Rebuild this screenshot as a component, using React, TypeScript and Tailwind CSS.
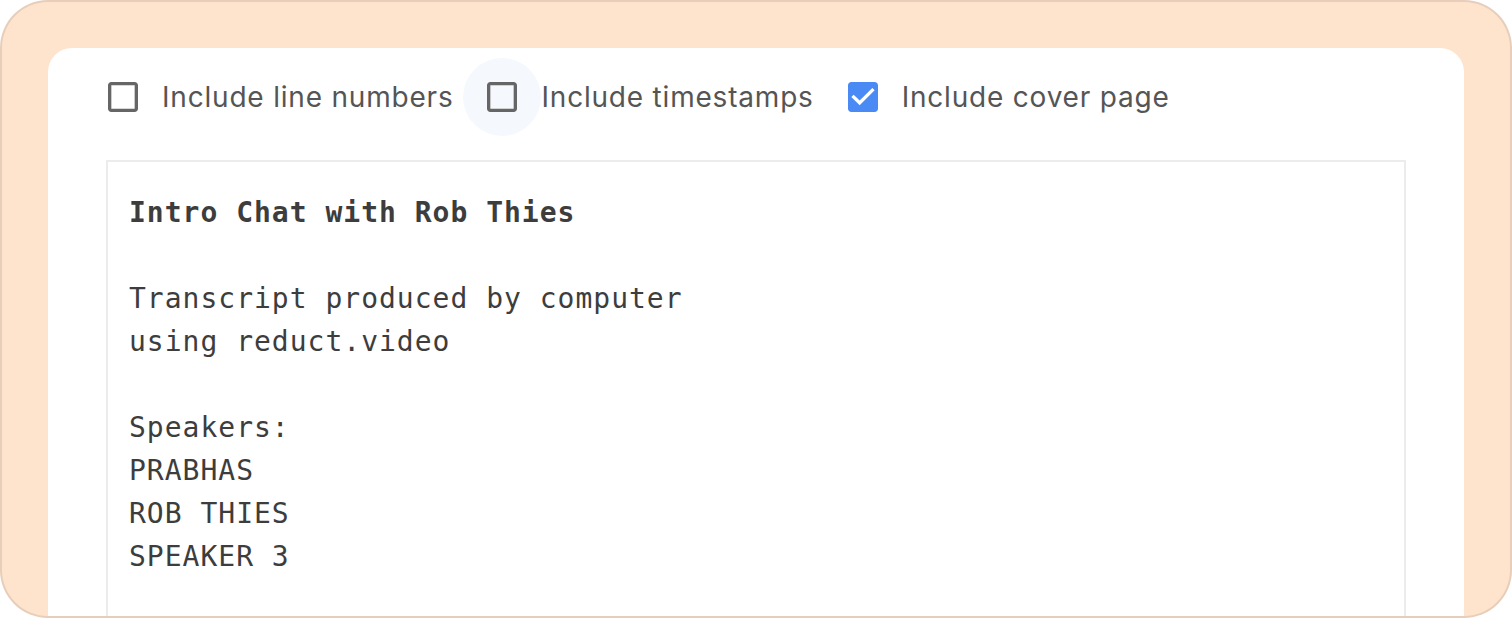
import React from "react";

const BLANK = "M19 5v14H5V5h14m0-2H5c-1.11 0-2 .9-2 2v14c0 1.1.89 2 2 2h14c1.11 0 2-.9 2-2V5c0-1.1-.89-2-2-2z";
const CHECKED = "M19 3H5c-1.11 0-2 .9-2 2v14c0 1.1.89 2 2 2h14c1.11 0 2-.9 2-2V5c0-1.1-.89-2-2-2zm-9 14l-5-5 1.41-1.41L10 14.17l7.59-7.59L19 8l-9 9z";

function Check({ label, checked, hover }: { label: string; checked?: boolean; hover?: boolean }) {
  return (
    <label className="flex items-center ml-[-22px] mr-[32px]">
      <span
        className={
          "flex items-center justify-center w-[78px] h-[78px] rounded-full " +
          (hover ? "bg-[#f5f8fd]" : "")
        }
      >
        <svg width="40" height="40" viewBox="0 0 24 24" fill={checked ? "#4a8af4" : "#666666"}>
          <path d={checked ? CHECKED : BLANK} />
        </svg>
      </span>
      <span
        className="text-[28px] leading-[42px] tracking-[0.8px] text-[#555555]"
        style={{ fontFamily: "Inter, 'Noto Sans', sans-serif" }}
      >
        {label}
      </span>
    </label>
  );
}

export default function App() {
  const lines = [
    "",
    "Transcript produced by computer",
    "using reduct.video",
    "",
    "Speakers:",
    "PRABHAS",
    "ROB THIES",
    "SPEAKER 3",
    "",
    "",
    "",
  ];
  return (
    <div className="w-[1512px] h-[618px] bg-white">
      <div className="w-full h-full rounded-[48px] border-2 border-black/[0.09] bg-[#fee3cd] overflow-hidden pt-[46px] px-[46px] flex flex-col">
        <div className="bg-white rounded-t-[24px] flex-1 pt-[10px] px-[58px] flex flex-col">
          <div className="flex items-center">
            <Check label="Include line numbers" />
            <Check label="Include timestamps" hover />
            <Check label="Include cover page" checked />
          </div>
          <div
            className="mt-[24px] border-2 border-[#ececec] pt-[29px] pl-[21px] h-[600px] text-[#3d3d3d] text-[28px] leading-[43px] tracking-[1px] whitespace-pre"
            style={{ fontFamily: "'DejaVu Sans Mono', 'Liberation Mono', monospace" }}
          >
            <div className="font-bold">Intro Chat with Rob Thies</div>
            {lines.map((l, i) => (
              <div key={i} className="h-[43px]">
                {l}
              </div>
            ))}
          </div>
        </div>
      </div>
    </div>
  );
}
